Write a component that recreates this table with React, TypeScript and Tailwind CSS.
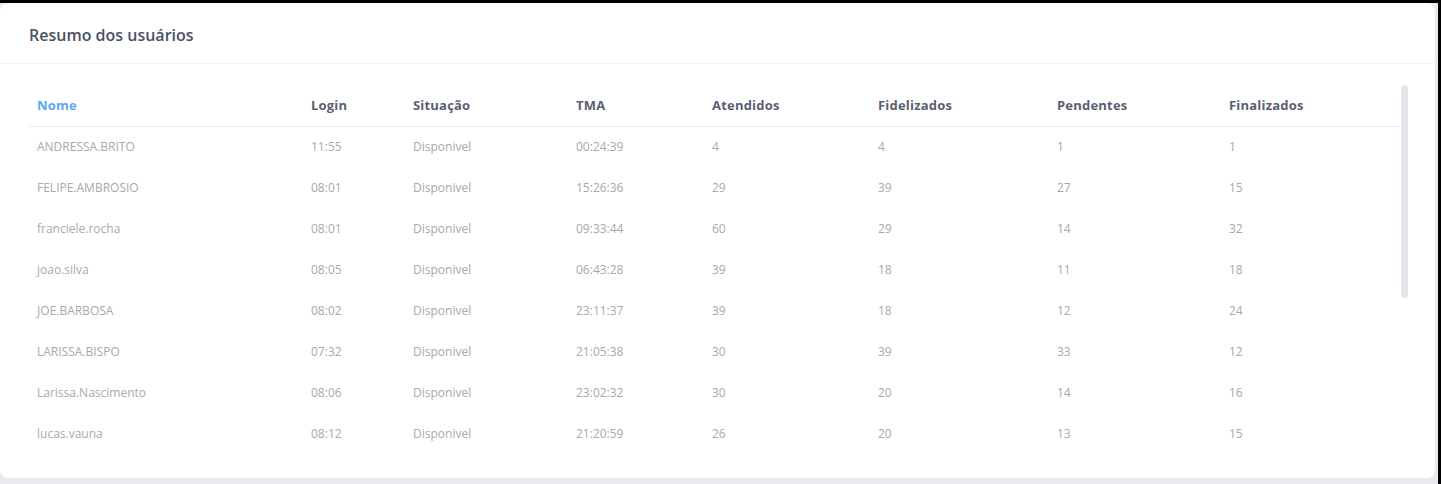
import React from "react";

/* ─── Data ───────────────────────────────────────────── */

type Row = {
  nome: string;
  login: string;
  situacao: string;
  tma: string;
  atendidos: number;
  fidelizados: number;
  pendentes: number;
  finalizados: number;
};

const ROWS: Row[] = [
  { nome: "ANDRESSA.BRITO", login: "11:55", situacao: "Disponivel", tma: "00:24:39", atendidos: 4, fidelizados: 4, pendentes: 1, finalizados: 1 },
  { nome: "FELIPE.AMBROSIO", login: "08:01", situacao: "Disponivel", tma: "15:26:36", atendidos: 29, fidelizados: 39, pendentes: 27, finalizados: 15 },
  { nome: "franciele.rocha", login: "08:01", situacao: "Disponivel", tma: "09:33:44", atendidos: 60, fidelizados: 29, pendentes: 14, finalizados: 32 },
  { nome: "joao.silva", login: "08:05", situacao: "Disponivel", tma: "06:43:28", atendidos: 39, fidelizados: 18, pendentes: 11, finalizados: 18 },
  { nome: "JOE.BARBOSA", login: "08:02", situacao: "Disponivel", tma: "23:11:37", atendidos: 39, fidelizados: 18, pendentes: 12, finalizados: 24 },
  { nome: "LARISSA.BISPO", login: "07:32", situacao: "Disponivel", tma: "21:05:38", atendidos: 30, fidelizados: 39, pendentes: 33, finalizados: 12 },
  { nome: "Larissa.Nascimento", login: "08:06", situacao: "Disponivel", tma: "23:02:32", atendidos: 30, fidelizados: 20, pendentes: 14, finalizados: 16 },
  { nome: "lucas.vauna", login: "08:12", situacao: "Disponivel", tma: "21:20:59", atendidos: 26, fidelizados: 20, pendentes: 13, finalizados: 15 },
];

const COLUMNS = [
  { label: "Nome", width: "w-[274px]", active: true },
  { label: "Login", width: "w-[102px]" },
  { label: "Situação", width: "w-[163px]" },
  { label: "TMA", width: "w-[136px]" },
  { label: "Atendidos", width: "w-[166px]" },
  { label: "Fidelizados", width: "w-[179px]" },
  { label: "Pendentes", width: "w-[172px]" },
  { label: "Finalizados", width: "w-[179px]" },
];

/* ─── Component ───────────────────────────────────────── */

export default function App() {
  return (
    <div
      className="h-[484px] w-[1441px] overflow-hidden border-t-[3px] border-r-[3px] border-black bg-[#e9e9f0]"
      style={{ fontFamily: '"Open Sans", "Noto Sans", sans-serif' }}
    >
      <div className="flex h-[475px] w-[1435px] flex-col overflow-hidden rounded-lg bg-white">
        {/* ── Header ─────────────────────────────────── */}
        <div className="flex h-[61px] shrink-0 items-center border-b border-[#f2f2f4] pt-[3px] pl-[29px]">
          <h2 className="text-[16px] font-semibold text-[#4b5064]">
            Resumo dos usuários
          </h2>
        </div>

        {/* ── Table + scrollbar ──────────────────────── */}
        <div className="flex min-h-0 flex-1 pt-[21px] pl-[29px]">
          <div className="w-[1371px] overflow-hidden">
            <table className="w-[1371px] table-fixed border-collapse text-left">
              <thead>
                <tr className="h-[41px] border-b border-[#ededf0]">
                  {COLUMNS.map((c) => (
                    <th
                      key={c.label}
                      className={`${c.width} px-2 pt-px text-[13px] font-bold tracking-[0.2px] ${
                        c.active ? "text-[#5aa9f8]" : "text-[#5a5f73]"
                      }`}
                    >
                      {c.label}
                    </th>
                  ))}
                </tr>
              </thead>
              <tbody className="text-[12px] text-[#a8a8ad]">
                {ROWS.map((r) => (
                  <tr key={r.nome} className="h-[41px]">
                    <td className="px-2 pt-px">{r.nome}</td>
                    <td className="px-2 pt-px">{r.login}</td>
                    <td className="px-2 pt-px">{r.situacao}</td>
                    <td className="px-2 pt-px">{r.tma}</td>
                    <td className="px-2 pt-px">{r.atendidos}</td>
                    <td className="px-2 pt-px">{r.fidelizados}</td>
                    <td className="px-2 pt-px">{r.pendentes}</td>
                    <td className="px-2 pt-px">{r.finalizados}</td>
                  </tr>
                ))}
              </tbody>
            </table>
          </div>
          <div className="ml-px w-[7px] shrink-0">
            <div className="h-[213px] w-[7px] rounded-full bg-[#e4e6eb]" />
          </div>
        </div>
      </div>
    </div>
  );
}
